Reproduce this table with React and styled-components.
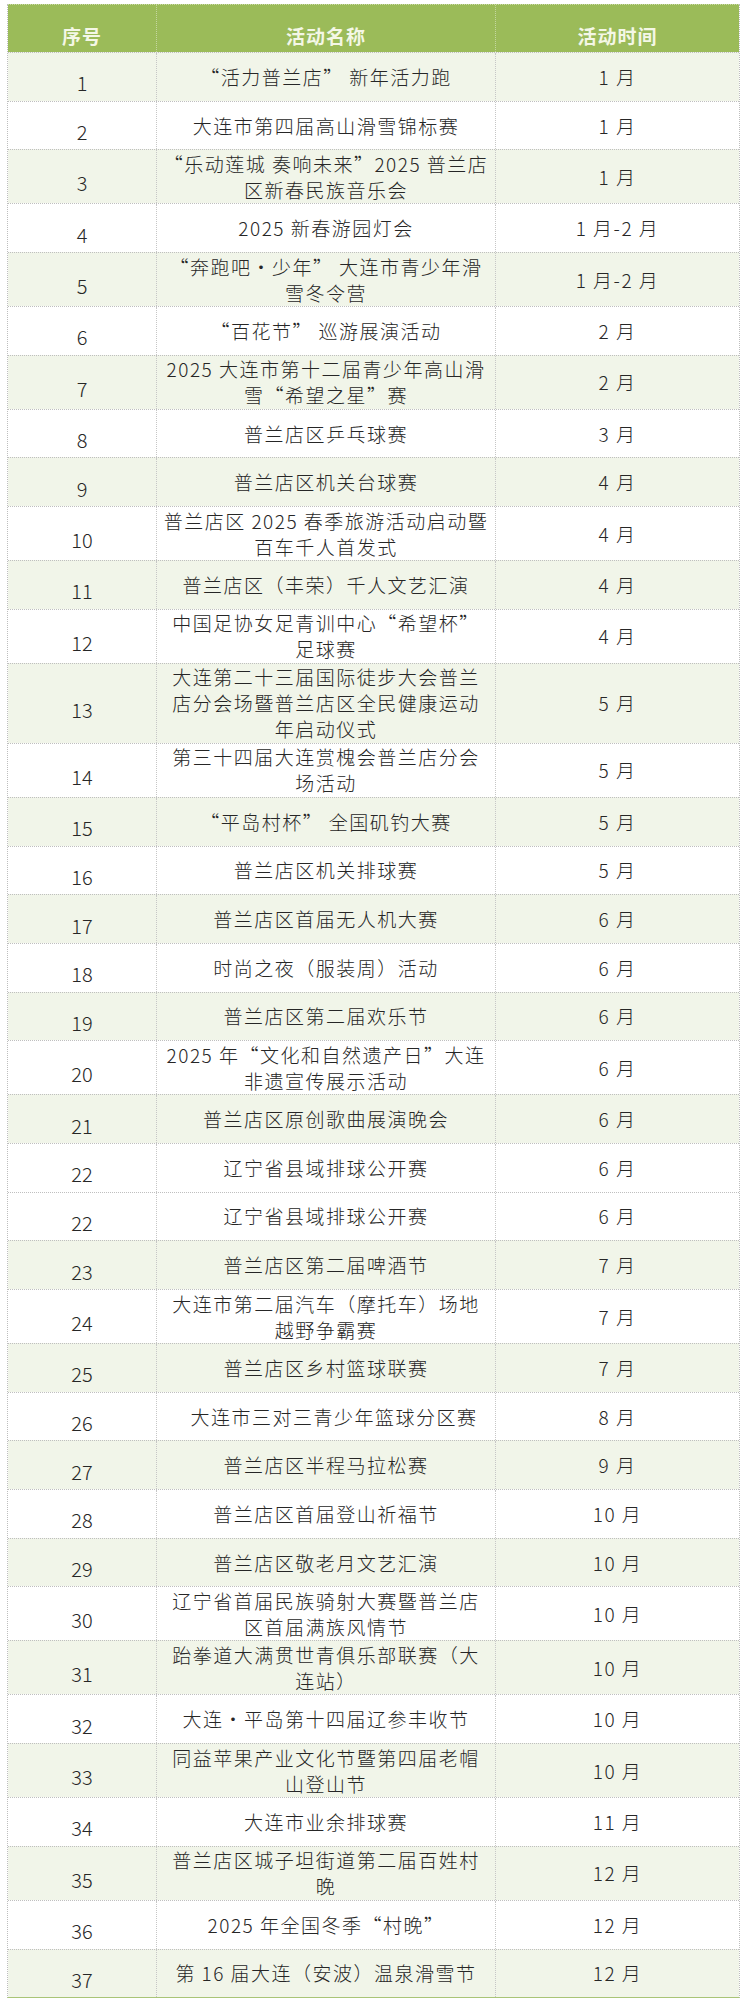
import React from "react";
import styled, { createGlobalStyle } from "styled-components";

const GlobalStyle = createGlobalStyle`
  html, body {
    margin: 0;
    padding: 0;
    background: #ffffff;
  }
  body {
    font-family: "Noto Sans CJK SC", "Noto Sans", sans-serif;
    color: #222222;
  }
`;

const events = [
  { no: "1", name: ["“活力普兰店” 新年活力跑"], time: "1 月" },
  { no: "2", name: ["大连市第四届高山滑雪锦标赛"], time: "1 月" },
  { no: "3", name: ["“乐动莲城 奏响未来”2025 普兰店", "区新春民族音乐会"], time: "1 月" },
  { no: "4", name: ["2025 新春游园灯会"], time: "1 月-2 月" },
  { no: "5", name: ["“奔跑吧•少年” 大连市青少年滑", "雪冬令营"], time: "1 月-2 月" },
  { no: "6", name: ["“百花节” 巡游展演活动"], time: "2 月" },
  { no: "7", name: ["2025 大连市第十二届青少年高山滑", "雪“希望之星”赛"], time: "2 月" },
  { no: "8", name: ["普兰店区乒乓球赛"], time: "3 月" },
  { no: "9", name: ["普兰店区机关台球赛"], time: "4 月" },
  { no: "10", name: ["普兰店区 2025 春季旅游活动启动暨", "百车千人首发式"], time: "4 月" },
  { no: "11", name: ["普兰店区（丰荣）千人文艺汇演"], time: "4 月" },
  { no: "12", name: ["中国足协女足青训中心“希望杯”", "足球赛"], time: "4 月" },
  {
    no: "13",
    name: ["大连第二十三届国际徒步大会普兰", "店分会场暨普兰店区全民健康运动", "年启动仪式"],
    time: "5 月",
  },
  { no: "14", name: ["第三十四届大连赏槐会普兰店分会", "场活动"], time: "5 月" },
  { no: "15", name: ["“平岛村杯” 全国矶钓大赛"], time: "5 月" },
  { no: "16", name: ["普兰店区机关排球赛"], time: "5 月" },
  { no: "17", name: ["普兰店区首届无人机大赛"], time: "6 月" },
  { no: "18", name: ["时尚之夜（服装周）活动"], time: "6 月" },
  { no: "19", name: ["普兰店区第二届欢乐节"], time: "6 月" },
  { no: "20", name: ["2025 年“文化和自然遗产日”大连", "非遗宣传展示活动"], time: "6 月" },
  { no: "21", name: ["普兰店区原创歌曲展演晚会"], time: "6 月" },
  { no: "22", name: ["辽宁省县域排球公开赛"], time: "6 月" },
  { no: "22", name: ["辽宁省县域排球公开赛"], time: "6 月" },
  { no: "23", name: ["普兰店区第二届啤酒节"], time: "7 月" },
  { no: "24", name: ["大连市第二届汽车（摩托车）场地", "越野争霸赛"], time: "7 月" },
  { no: "25", name: ["普兰店区乡村篮球联赛"], time: "7 月" },
  { no: "26", name: ["大连市三对三青少年篮球分区赛"], time: "8 月", shift: 16 },
  { no: "27", name: ["普兰店区半程马拉松赛"], time: "9 月" },
  { no: "28", name: ["普兰店区首届登山祈福节"], time: "10 月" },
  { no: "29", name: ["普兰店区敬老月文艺汇演"], time: "10 月" },
  { no: "30", name: ["辽宁省首届民族骑射大赛暨普兰店", "区首届满族风情节"], time: "10 月" },
  { no: "31", name: ["跆拳道大满贯世青俱乐部联赛（大", "连站）"], time: "10 月" },
  { no: "32", name: ["大连•平岛第十四届辽参丰收节"], time: "10 月" },
  { no: "33", name: ["同益苹果产业文化节暨第四届老帽", "山登山节"], time: "10 月" },
  { no: "34", name: ["大连市业余排球赛"], time: "11 月" },
  { no: "35", name: ["普兰店区城子坦街道第二届百姓村", "晚"], time: "12 月" },
  { no: "36", name: ["2025 年全国冬季“村晚”"], time: "12 月" },
  { no: "37", name: ["第 16 届大连（安波）温泉滑雪节"], time: "12 月" },
];

// row heights measured from the sheet: 1, 2 and 3 lines of text
const rowHeights = { 1: 48.7, 2: 54, 3: 80 };

const Page = styled.div`
  padding: 4px 0 0 7px;
`;

const Table = styled.div`
  width: 733px;
  box-sizing: border-box;
  border-left: 1px dotted #bdbdbd;
  border-right: 1px dotted #bdbdbd;
  border-bottom: 1.5px solid #a9c577;
`;

const HeaderRow = styled.div`
  display: grid;
  grid-template-columns: 148px 339px 1fr;
  height: 48px;
  background: #9bbb59;
  border-top: 1px dotted #c9d9a8;
  box-sizing: border-box;
`;

const HeaderCell = styled.div`
  display: flex;
  align-items: center;
  justify-content: center;
  padding-top: 13px;
  box-sizing: border-box;
  color: #f4f7e6;
  font-size: 19px;
  font-weight: 700;
  letter-spacing: 1px;
  & + & {
    border-left: 1px dotted #c4d69f;
  }
`;

const Row = styled.div`
  display: grid;
  grid-template-columns: 148px 339px 1fr;
  height: ${(props) => rowHeights[props.lines]}px;
  box-sizing: border-box;
  background: ${(props) => (props.tinted ? "#f1f5e9" : "#ffffff")};
  border-top: 1px dotted #bfbfbf;
`;

const Cell = styled.div`
  display: flex;
  flex-direction: column;
  align-items: center;
  justify-content: center;
  box-sizing: border-box;
  font-size: 19px;
  font-weight: 300;
  line-height: 26px;
  letter-spacing: 1.5px;
  color: #262626;
  & + & {
    border-left: 1px dotted #c6c6c6;
  }
`;

const NumberCell = styled(Cell)`
  padding-top: 13px;
  font-size: 20px;
  letter-spacing: 0;
`;

const NameLine = styled.span`
  white-space: nowrap;
  height: 26px;
  padding-left: ${(props) => props.shift || 0}px;
`;

const App = () => {
  return (
    <>
      <GlobalStyle />
      <Page>
        <Table>
          <HeaderRow>
            <HeaderCell>序号</HeaderCell>
            <HeaderCell>活动名称</HeaderCell>
            <HeaderCell>活动时间</HeaderCell>
          </HeaderRow>
          {events.map((item, i) => (
            <Row key={i} lines={item.name.length} tinted={Number(item.no) % 2 === 1}>
              <NumberCell>{item.no}</NumberCell>
              <Cell>
                {item.name.map((line) => (
                  <NameLine key={line} shift={item.shift}>
                    {line}
                  </NameLine>
                ))}
              </Cell>
              <Cell>{item.time}</Cell>
            </Row>
          ))}
        </Table>
      </Page>
    </>
  );
};

export default App;
